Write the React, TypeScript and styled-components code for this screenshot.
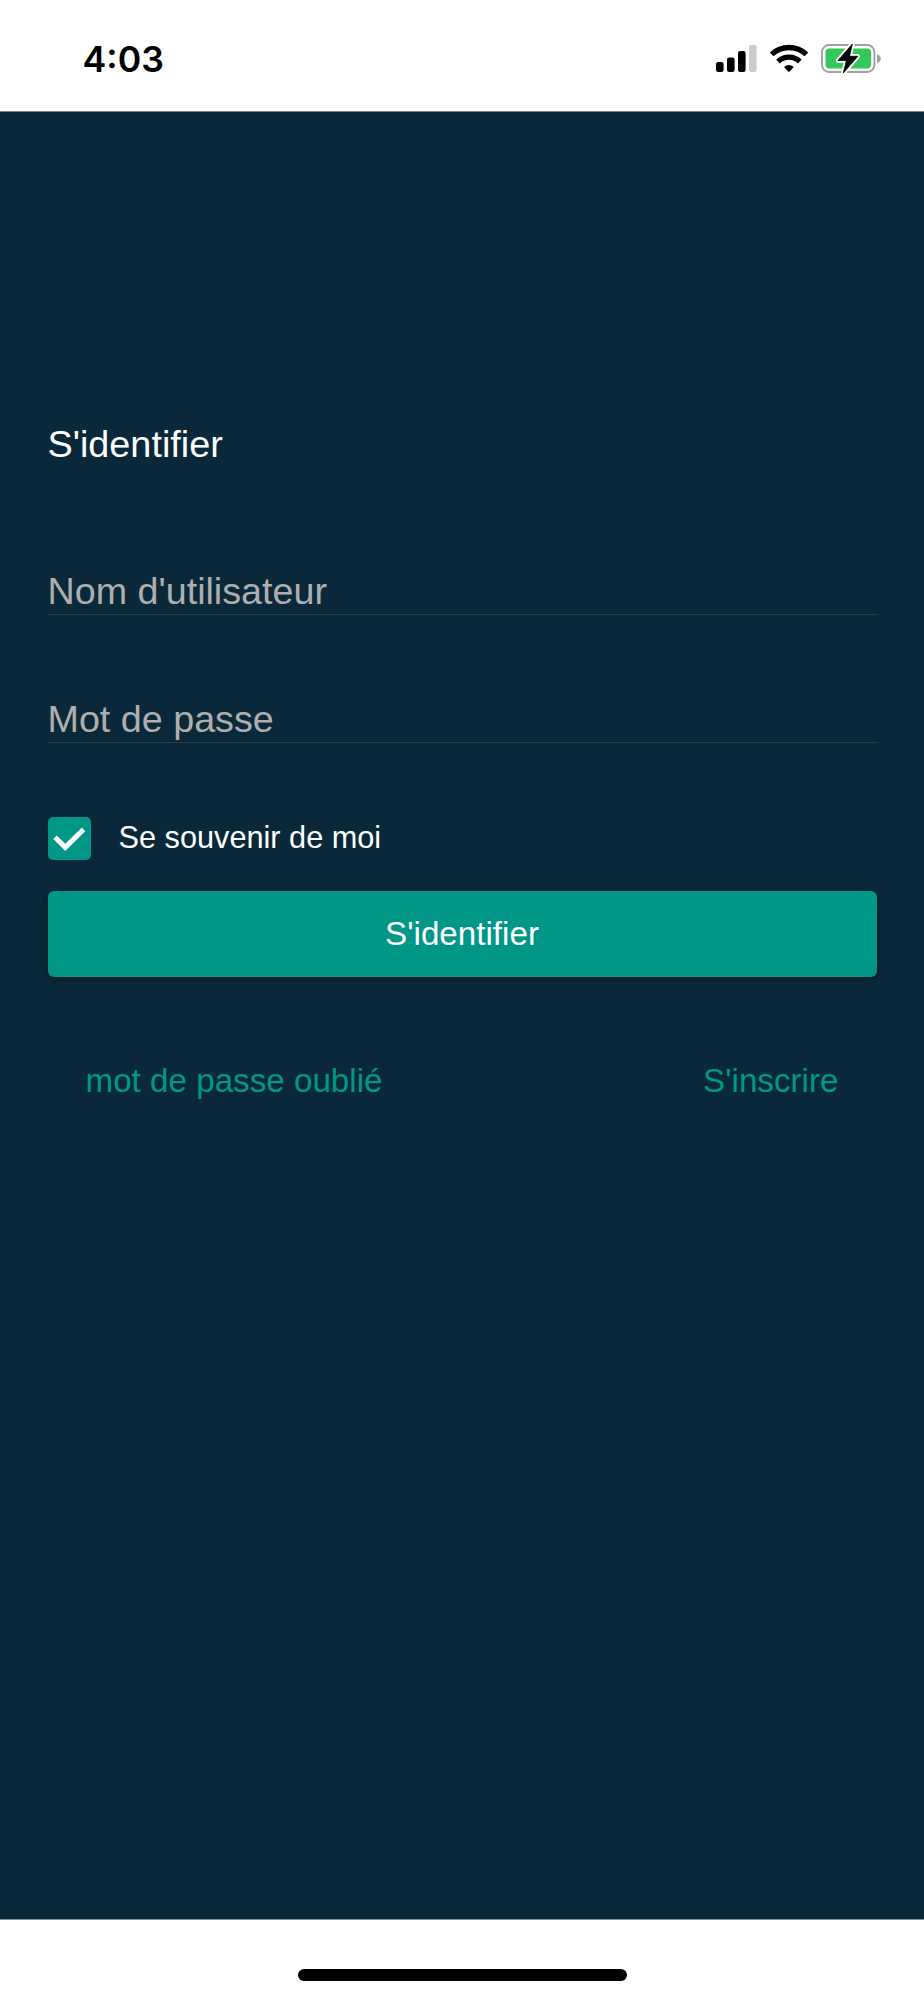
import React, { useState } from "react";
import styled, { createGlobalStyle } from "styled-components";

const GlobalStyle = createGlobalStyle`
  *, *::before, *::after { box-sizing: border-box; }
  html, body { margin: 0; padding: 0; background: #fff; }
  body { font-family: "Liberation Sans", Arial, Helvetica, sans-serif; font-variant-ligatures: none; }
`;

const Screen = styled.div`
  display: flex;
  flex-direction: column;
  width: 924px;
  height: 2000px;
  background: #fff;
  overflow: hidden;
`;

const StatusBar = styled.header`
  display: flex;
  flex: none;
  justify-content: space-between;
  height: 111px;
  padding: 37px 41px 0 82.5px;
`;

const Clock = styled.time`
  font: 600 35.7px/44px Inter, sans-serif;
  color: #000;
`;

const StatusIcons = styled.svg`
  display: block;
  width: 170px;
  height: 44px;
`;

const Page = styled.main`
  display: flex;
  flex-direction: column;
  flex: none;
  height: 1809px;
  padding: 310px 47.5px 0;
  background: #09293a;
  border-top: 1px solid #6b7f89;
  border-bottom: 1px solid #8495a0;
`;

const Title = styled.h1`
  margin: 0 0 98px;
  font-size: 37.8px;
  font-weight: 400;
  line-height: 44px;
  color: #fff;
`;

const Field = styled.input`
  flex: none;
  width: 100%;
  height: 51px;
  margin: 0 0 77px;
  padding: 5px 0 0;
  border: 0;
  border-bottom: 1px solid #293f4b;
  border-radius: 0;
  outline: 0;
  background: transparent;
  font: 400 37.7px/44px "Liberation Sans", Arial, sans-serif;
  color: #fff;
  &::placeholder { color: #aeaeae; opacity: 1; }
`;

const Remember = styled.label`
  display: flex;
  height: 43px;
  margin: -3px 0 31px;
  font-size: 30.7px;
  line-height: 41px;
  color: #fff;
`;

const CheckBox = styled.button`
  flex: none;
  width: 43px;
  height: 43px;
  margin: 0 28px 0 0;
  padding: 0;
  border: 0;
  border-radius: 5px;
  background: ${(p) => (p["aria-checked"] ? "#009688" : "#173c4b")};
  svg { display: block; }
`;

const Submit = styled.button`
  flex: none;
  height: 86px;
  padding: 0;
  border: 0;
  border-radius: 6px;
  background: #009688;
  box-shadow: 0 2px 6px rgba(0, 0, 0, 0.4);
  font: 400 33.2px/86px "Liberation Sans", Arial, sans-serif;
  color: #fff;
`;

const Links = styled.nav`
  display: flex;
  justify-content: space-between;
  margin-top: 84px;
  padding: 0 38px;
`;

const TextLink = styled.a`
  font-size: 33.2px;
  line-height: 40px;
  color: #009688;
  text-decoration: none;
`;

const HomeArea = styled.footer`
  display: flex;
  flex: 1;
  justify-content: center;
  padding-top: 49px;
`;

const HomeIndicator = styled.div`
  width: 329px;
  height: 12px;
  border-radius: 6px;
  background: #000;
`;

function PhoneStatus() {
  return (
    <StatusIcons viewBox="713 37 170 44" aria-hidden="true">
      <rect x="716" y="62" width="7.6" height="10" rx="2.2" />
      <rect x="727" y="57.4" width="7.6" height="14.6" rx="2.2" />
      <rect x="738" y="51" width="7.6" height="21" rx="2.2" />
      <rect x="749" y="45" width="7.6" height="27" rx="2.2" fill="#cbcbcb" />
      <path d="M771.6 54.4A25.2 25.2 0 0 1 806.4 54.4" fill="none" stroke="#000" strokeWidth="5.4" />
      <path d="M778 61.5A15.8 15.8 0 0 1 799.8 61.5" fill="none" stroke="#000" strokeWidth="5.2" />
      <path d="M784 67.1Q788.9 62.8 793.8 67.1L788.9 72.2Z" />
      <rect x="822" y="45" width="52.4" height="27" rx="7" fill="none" stroke="#a0a0a0" strokeWidth="1.9" />
      <rect x="825.5" y="48.6" width="45.6" height="19.8" rx="4" fill="#34c759" />
      <path d="M877 54.2Q880.8 55.4 880.8 58.6T877 63Z" fill="#a0a0a0" />
      <path
        d="M852.4 44L838 60.5H846.4L843.3 73L857.8 56.3H849.5Z"
        fill="#fff"
        stroke="#fff"
        strokeWidth="4.4"
        strokeLinejoin="round"
      />
      <path
        d="M852.4 44L838 60.5H846.4L843.3 73L857.8 56.3H849.5Z"
        stroke="#000"
        strokeWidth="0.8"
        strokeLinejoin="round"
      />
    </StatusIcons>
  );
}

export default function App() {
  const [remember, setRemember] = useState(true);
  return (
    <>
      <GlobalStyle />
      <Screen>
        <StatusBar>
          <Clock>4:03</Clock>
          <PhoneStatus />
        </StatusBar>
        <Page>
          <Title>S'identifier</Title>
          <Field type="text" placeholder="Nom d'utilisateur" />
          <Field type="password" placeholder="Mot de passe" />
          <Remember>
            <CheckBox type="button" role="checkbox" aria-checked={remember} onClick={() => setRemember(!remember)}>
              {remember && (
                <svg width="43" height="43" viewBox="0 0 43 43">
                  <path d="M7 20.2L17.3 30.4L35.6 12.4" fill="none" stroke="#fff" strokeWidth="5" />
                </svg>
              )}
            </CheckBox>
            Se souvenir de moi
          </Remember>
          <Submit type="button">S'identifier</Submit>
          <Links>
            <TextLink href="#">mot de passe oublié</TextLink>
            <TextLink href="#">S'inscrire</TextLink>
          </Links>
        </Page>
        <HomeArea>
          <HomeIndicator />
        </HomeArea>
      </Screen>
    </>
  );
}
